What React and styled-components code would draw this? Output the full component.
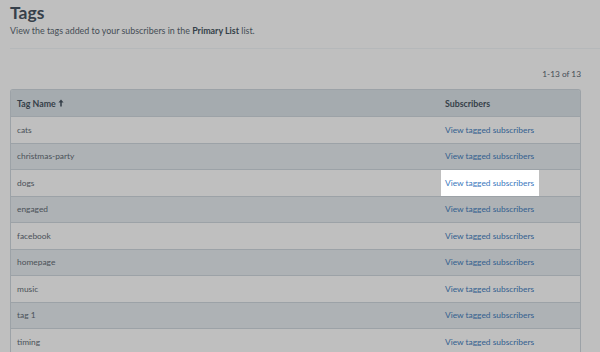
import React from 'react';
import styled, { createGlobalStyle } from 'styled-components';

const GlobalStyle = createGlobalStyle`
  html, body {
    margin: 0;
    padding: 0;
    background: #bfbfbf;
    font-family: Lato, "Open Sans", sans-serif;
    overflow: hidden;
  }
`;

const Page = styled.div`
  width: 600px;
  height: 352px;
  padding: 0 19px 0 10px;
  box-sizing: border-box;
  overflow: hidden;
`;

const Title = styled.h1`
  margin: 0;
  padding-top: 2px;
  font-size: 17.5px;
  font-weight: 700;
  line-height: 22px;
  color: #36404a;
`;

const Subtitle = styled.p`
  margin: 1px 0 0;
  font-size: 8.9px;
  line-height: 12px;
  color: #454d55;
  b {
    color: #353f49;
  }
`;

const Rule = styled.hr`
  margin: 11px -19px 0 0;
  border: 0;
  border-top: 1px solid #b5b8ba;
`;

const Count = styled.div`
  text-align: right;
  margin-top: 19px;
  font-size: 8.3px;
  line-height: 12px;
  color: #454d55;
`;

const Table = styled.div`
  margin-top: 9px;
  border: 1px solid #9ca2a7;
  border-bottom: 0;
  border-radius: 3px 3px 0 0;
  overflow: hidden;
`;

const Row = styled.div`
  display: grid;
  grid-template-columns: 428px 1fr;
  align-items: center;
  background: ${p => (p.$head ? '#a5abaf' : p.$alt ? '#aeb2b5' : '#bfbfbf')};
  border-top: ${p => (p.$head ? '0' : '1px solid #9ca2a7')};
  font-size: ${p => (p.$head ? '8.8px' : '8.4px')};
  color: ${p => (p.$head ? '#353f49' : '#4a5158')};
  font-weight: ${p => (p.$head ? 700 : 400)};
  box-sizing: border-box;
  height: ${p => (p.$head ? '26px' : '26.5px')};
`;

const Cell = styled.div`
  padding-left: 6px;
  display: flex;
  align-items: center;
  gap: 2px;
  height: 100%;
`;

const LinkCell = styled.div`
  height: 100%;
  display: flex;
  align-items: center;
`;

const LinkBox = styled.div`
  height: 100%;
  display: flex;
  align-items: center;
  padding: 0 5px 0 4px;
  margin-left: 2px;
  background: ${p => (p.$spot ? '#ffffff' : 'transparent')};
  color: ${p => (p.$spot ? '#3a78bd' : '#32608f')};
`;

const Arrow = () => (
  <svg width="6" height="8" viewBox="0 0 7 9">
    <path d="M3.5 0.5 L6.5 4 H4.4 V8.5 H2.6 V4 H0.5 Z" fill="#353f49" />
  </svg>
);

const tags = [
  'cats',
  'christmas-party',
  'dogs',
  'engaged',
  'facebook',
  'homepage',
  'music',
  'tag 1',
  'timing',
];

export default function App() {
  return (
    <Page>
      <GlobalStyle />
      <Title>Tags</Title>
      <Subtitle>
        View the tags added to your subscribers in the <b>Primary List</b> list.
      </Subtitle>
      <Rule />
      <Count>1-13 of 13</Count>
      <Table>
        <Row $head>
          <Cell>
            Tag Name <Arrow />
          </Cell>
          <Cell>Subscribers</Cell>
        </Row>
        {tags.map((t, i) => (
          <Row key={t} $alt={i % 2 === 1}>
            <Cell>{t}</Cell>
            <LinkCell>
              <LinkBox $spot={t === 'dogs'}>View tagged subscribers</LinkBox>
            </LinkCell>
          </Row>
        ))}
      </Table>
    </Page>
  );
}
